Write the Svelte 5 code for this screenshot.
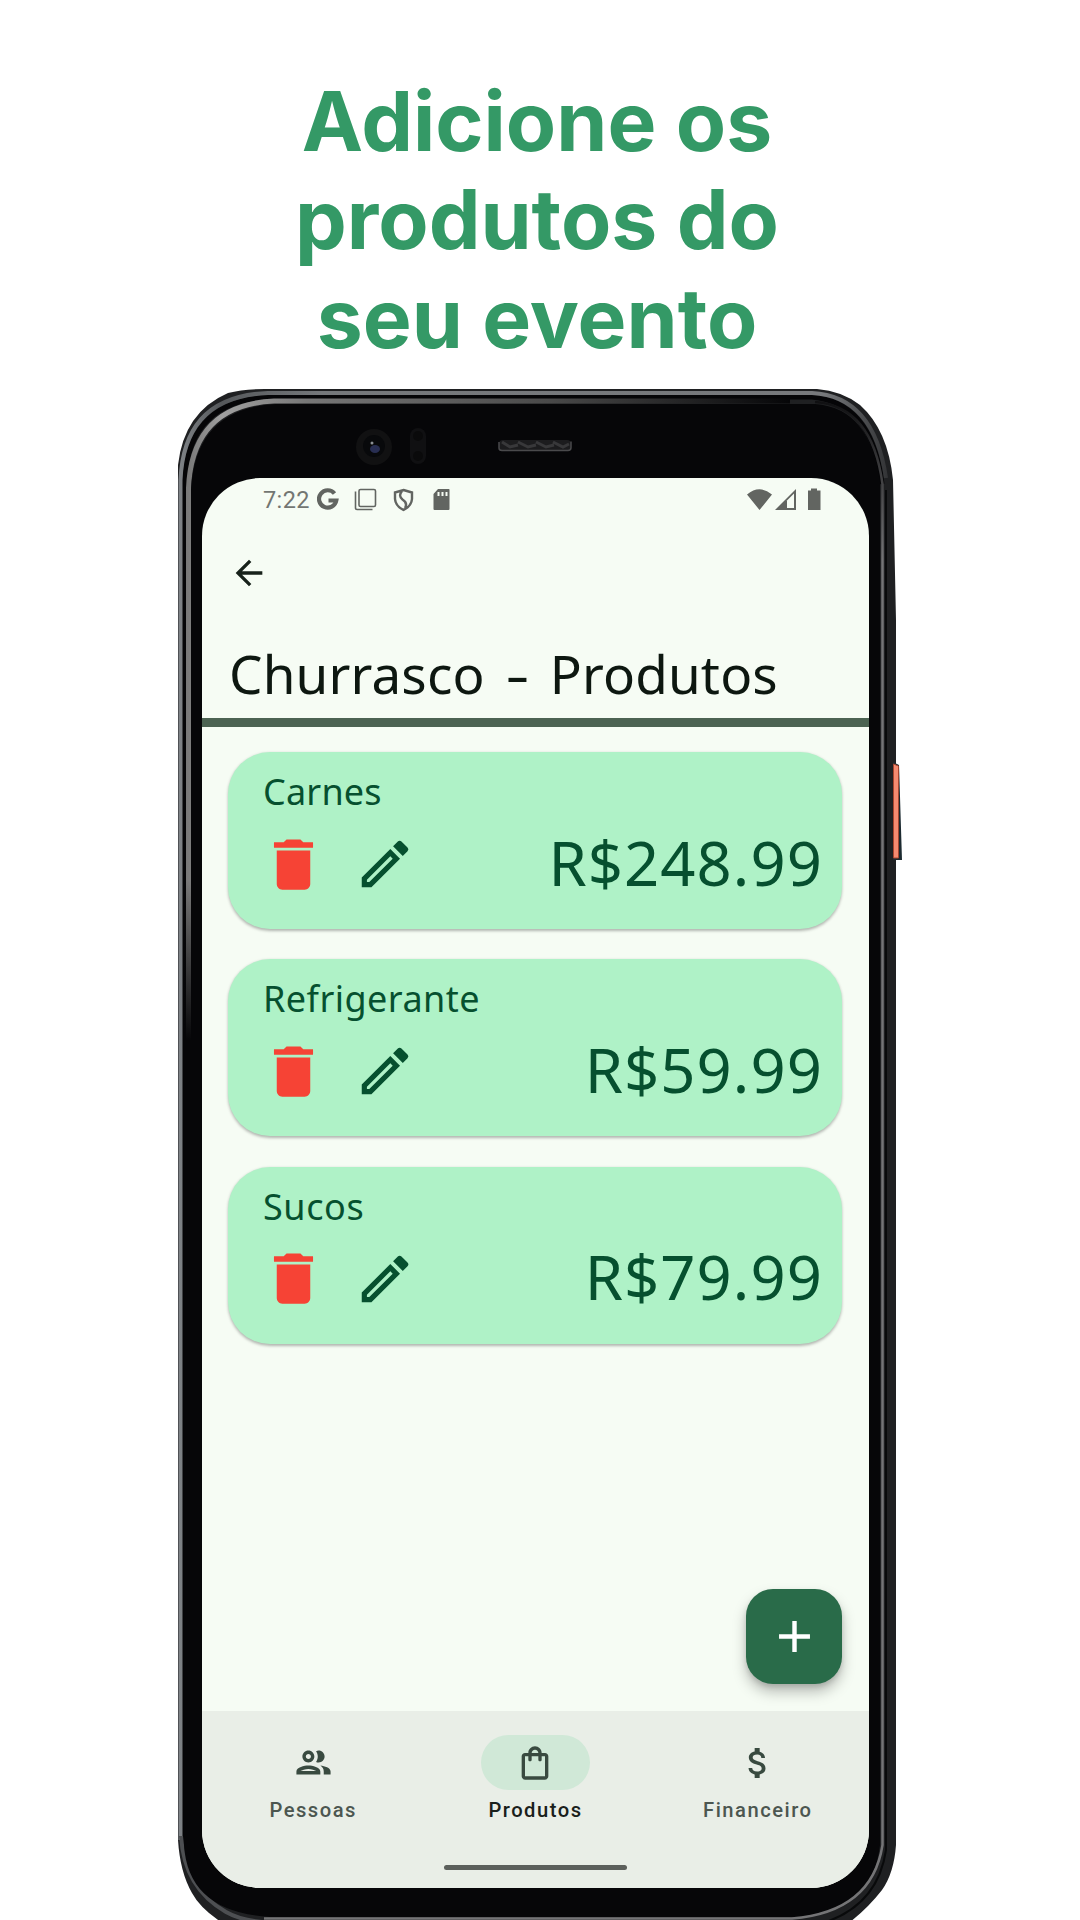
<script>
  const products = [
    { name: 'Carnes', price: 'R$248.99', cls: 'carnes' },
    { name: 'Refrigerante', price: 'R$59.99', cls: 'refri' },
    { name: 'Sucos', price: 'R$79.99', cls: 'sucos' }
  ];
</script>

<main class="page">
  <h1>Adicione os<br />produtos do<br />seu evento</h1>

  <div class="phone">
    <svg class="frame" width="726" height="1531" viewBox="178 389 726 1531" aria-hidden="true">
      <defs>
        <linearGradient id="rim" gradientUnits="userSpaceOnUse" x1="178" x2="896" y1="0" y2="0">
          <stop offset="0" stop-color="#808488" />
          <stop offset="0.06" stop-color="#55585b" />
          <stop offset="0.2" stop-color="#75787b" />
          <stop offset="0.9" stop-color="#77797c" />
          <stop offset="1" stop-color="#2a2b2d" />
        </linearGradient>
        <linearGradient id="bevel" gradientUnits="userSpaceOnUse" x1="186" x2="790" y1="0" y2="0">
          <stop offset="0" stop-color="#777" />
          <stop offset="0.06" stop-color="#a0a0a0" />
          <stop offset="0.2" stop-color="#777" />
          <stop offset="0.6" stop-color="#4a4a4a" />
          <stop offset="1" stop-color="#060608" />
        </linearGradient>
        <linearGradient id="fade" x1="0" x2="0" y1="0" y2="1">
          <stop offset="0" stop-color="#060608" stop-opacity="0" />
          <stop offset="1" stop-color="#060608" />
        </linearGradient>
        <linearGradient id="side" gradientUnits="userSpaceOnUse" x1="0" x2="0" y1="402" y2="560">
          <stop offset="0" stop-color="#101012" />
          <stop offset="1" stop-color="#747476" />
        </linearGradient>
      </defs>
      <path fill="#1f2022" d="M178 465Q184 412 228 393Q243 389 265 389H817Q842 391 860 405Q888 430 893 480L896 620V1845Q894 1873 882 1890Q868 1908 850 1922H221Q200 1908 192 1893Q180 1872 178 1840Z" />
      <path fill="none" stroke="#050507" stroke-width="5" d="M184.500 1844V484Q187 400 270 397H812Q872 402 882 484" />
      <path fill="none" stroke="url(#rim)" stroke-width="4" d="M180.500 1840V480Q184 396 268 393H812Q874 396 886 478" />
      <path fill="none" stroke="#4d4f52" stroke-width="4" d="M181 1836Q184 1888 226 1912Q240 1920 262 1922" />
      <path fill="none" stroke="url(#bevel)" stroke-width="5" d="M188.500 1040V488Q192 405 274 401H790" />
      <path fill="#060608" d="M191 1040V490Q195 408 276 404H815Q871 408 880 484V1845Q872 1917 792 1917H270Q188 1912 184 1845V1040Z" />
      <rect x="184" y="880" width="8" height="161" fill="url(#fade)" />
      <path fill="none" stroke="url(#side)" stroke-width="2.500" d="M815 402Q872 406 882.500 484V1845Q872 1912 792 1918.500H264" />
      <path fill="none" stroke="#090a0b" stroke-width="2" d="M886 490V1850Q878 1904 826 1922" />
      <circle cx="374" cy="447" r="18" fill="#111112" />
      <circle cx="374" cy="446" r="11" fill="#08090b" />
      <ellipse cx="375" cy="449" rx="5" ry="4" fill="#282e52" />
      <circle cx="372" cy="443" r="1.500" fill="#8b9094" />
      <rect x="410" y="428" width="16" height="36" rx="8" fill="#101012" />
      <circle cx="418" cy="436" r="5" fill="#0a0a0b" />
      <circle cx="418" cy="456" r="5" fill="#0a0a0b" />
      <rect x="499" y="440" width="72" height="11" rx="4" fill="#1c1c1e" />
      <path fill="none" stroke="#38383a" stroke-width="3" d="M502 442l8 5 8-2M518 442l10 5 8-2M536 442l10 5 8-2M553 442l10 5 6-3" />
      <path fill="none" stroke="#4a4a4c" stroke-width="1.500" d="M499 442v6q0 2.500 3 2.500h66q3 0 3-3v-6" />
      <path fill="#1c2a30" d="M893 762l6 3 3 95h-9Z" />
      <path fill="#f58a70" stroke="#a8452f" d="M893.500 764l5 2v92h-5Z" />
    </svg>

    <section class="screen">
      <div class="status">
        <span class="time">7:22</span>
        <svg class="notices" width="136" height="24" viewBox="0 0 136 24">
          <g fill="none" stroke="#626561">
            <path stroke-width="4.200" d="M17.500 5.500A8.700 8.700 0 1 0 19.300 12.500H11.500" />
            <path stroke-width="1.600" d="M43.500 1.500H57Q58.500 1.500 58.500 3V17Q58.500 18.500 57 18.500H43.500Q42 18.500 42 17V3Q42 1.500 43.500 1.500ZM38.500 3.500V20Q38.500 21.500 40 21.500H55.500" />
            <path stroke-width="2.400" d="M86.500 2L95 4.500V11Q94.500 18 86.500 22Q78.500 18 78 11V4.500ZM85 3Q81 8 85.500 11.500Q91 15 88 20" />
          </g>
          <path fill="#626561" fill-rule="evenodd" d="M121 1H132Q132.500 1 132.500 2V21Q132.500 22 131.500 22H117.500Q116.500 22 116.500 21V6ZM120.500 4V8H122.500V4ZM124.500 4V8H126.500V4ZM128.500 4V8H130.500V4Z" />
        </svg>
        <svg class="signals" width="76" height="24" viewBox="0 0 76 24">
          <path fill="#626561" d="M0 6.500Q12.500-4 25 6.500L12.500 22ZM28 22L49 1V22ZM61 2.500H64V0.500H70V2.500H73.500V22H61Z" />
          <path fill="#f6fcf4" d="M40 12.500L47 5.500V20H40Z" />
        </svg>
      </div>

      <header>
        <svg class="back" width="40" height="40" viewBox="0 0 24 24"><path fill="#17211a" d="M20 11H7.830l5.590-5.590L12 4l-8 8 8 8 1.410-1.410L7.830 13H20z" /></svg>
        <h2>Churrasco <span class="dash">-</span> Produtos</h2>
      </header>

      <div class="list">
        {#each products as p}
          <article>
            <h3 class={p.cls}>{p.name}</h3>
            <div class="row">
              <svg class="trash" width="67" height="67" viewBox="0 0 24 24"><path fill="#f64335" d="M6 19c0 1.100.9 2 2 2h8c1.100 0 2-.9 2-2V7H6zM19 4h-3.500l-1-1h-5l-1 1H5v2h14z" /></svg>
              <svg class="edit" width="62" height="62" viewBox="0 0 24 24"><path fill="#06502f" d="M14.060 9.020l.92.92L5.920 19H5v-.92zM17.660 3c-.25 0-.51.1-.7.290l-1.830 1.830 3.750 3.750 1.830-1.830a.996.996 0 0 0 0-1.410l-2.340-2.340c-.2-.2-.45-.29-.71-.29M14.060 6.190L3 17.250V21h3.750L17.810 9.940z" /></svg>
              <span class="price">{p.price}</span>
            </div>
          </article>
        {/each}
      </div>

      <div class="action">
        <button aria-label="Adicionar"><svg width="53" height="53" viewBox="0 0 24 24"><path fill="#fff" d="M19 13h-6v6h-2v-6H5v-2h6V5h2v6h6z" /></svg></button>
      </div>

      <nav>
        <div class="tabs">
          <div class="tab">
            <span class="pill"><svg width="41" height="41" viewBox="0 0 24 24"><path fill="#394a40" d="M9 13.750c-2.340 0-7 1.170-7 3.500V19h14v-1.750c0-2.330-4.660-3.500-7-3.500zM4.340 17c.84-.58 2.870-1.250 4.660-1.250s3.820.67 4.660 1.250H4.340zM9 12c1.930 0 3.500-1.570 3.500-3.500S10.930 5 9 5 5.500 6.570 5.500 8.500 7.070 12 9 12zm0-5c.83 0 1.500.67 1.500 1.500S9.830 10 9 10s-1.500-.67-1.500-1.500S8.170 7 9 7zm7.040 6.810c1.160.84 1.960 1.960 1.960 3.440V19h4v-1.750c0-2.020-3.500-3.170-5.960-3.440zM15 12c1.930 0 3.500-1.570 3.500-3.500S16.930 5 15 5c-.54 0-1.040.13-1.500.35.63.89 1 1.980 1 3.150s-.37 2.260-1 3.150c.46.22.96.35 1.500.35z" /></svg></span>
            <span class="label">Pessoas</span>
          </div>
          <div class="tab selected">
            <span class="pill"><svg width="40" height="40" viewBox="0 0 24 24"><path fill="#394a40" d="M18 6h-2c0-2.210-1.790-4-4-4S8 3.790 8 6H6c-1.100 0-2 .9-2 2v12c0 1.100.9 2 2 2h12c1.100 0 2-.9 2-2V8c0-1.100-.9-2-2-2m-6-2c1.100 0 2 .9 2 2h-4c0-1.100.9-2 2-2m6 16H6V8h2v2c0 .55.450 1 1 1s1-.45 1-1V8h4v2c0 .55.450 1 1 1s1-.45 1-1V8h2z" /></svg></span>
            <span class="label">Produtos</span>
          </div>
          <div class="tab">
            <span class="pill"><svg width="40" height="40" viewBox="0 0 24 24"><path fill="#394a40" d="M11.800 10.900c-2.270-.59-3-1.200-3-2.150 0-1.090 1.010-1.850 2.700-1.850 1.780 0 2.440.85 2.500 2.100h2.210c-.07-1.720-1.120-3.300-3.210-3.810V3h-3v2.160c-1.940.42-3.500 1.680-3.500 3.610 0 2.310 1.910 3.460 4.700 4.130 2.500.6 3 1.480 3 2.410 0 .69-.49 1.790-2.700 1.790-2.060 0-2.870-.92-2.980-2.100h-2.200c.12 2.190 1.760 3.420 3.680 3.830V21h3v-2.150c1.950-.37 3.500-1.500 3.500-3.550 0-2.840-2.430-3.810-4.700-4.400" /></svg></span>
            <span class="label">Financeiro</span>
          </div>
        </div>
        <div class="handle"></div>
      </nav>
    </section>
  </div>
</main>

<style>
  :global(body) { background: #fff; }
  * { box-sizing: border-box; margin: 0; }
  svg { display: block; flex: none; }
  .page {
    width: 1080px;
    height: 1920px;
    overflow: hidden;
    background: #fff;
    display: flex;
    flex-direction: column;
  }
  h1 {
    height: 317px;
    margin-top: 72px;
    padding-right: 6px;
    font: 700 82.200px/98.400px Inter, sans-serif;
    color: #349966;
    text-align: center;
  }
  .phone { display: grid; margin-left: 178px; width: 726px; height: 1531px; }
  .frame, .screen { grid-area: 1 / 1; }
  .screen {
    margin: 89px 0 0 24px;
    width: 667px;
    height: 1410px;
    border-radius: 58px;
    overflow: hidden;
    background: #f6fcf4;
    display: flex;
    flex-direction: column;
    font-family: "Noto Sans", sans-serif;
  }
  .status {
    display: flex;
    align-items: center;
    height: 43px;
    padding: 0 46px 0 61px;
  }
  .time { width: 54px; font: 400 23.500px Roboto, sans-serif; letter-spacing: 0.400px; color: #737672; }
  .signals { margin-left: auto; }
  header {
    height: 206px;
    border-bottom: 9px solid #4c6352;
    padding: 32px 0 0 27px;
  }
  h2 {
    margin-top: 44px;
    font-size: 53px;
    line-height: 74px;
    font-weight: 400;
    letter-spacing: 0.150px;
    word-spacing: 10px;
    color: #0d1710;
    white-space: nowrap;
  }
  .dash { display: inline-block; transform: scaleX(1.400); }
  .list { display: flex; flex-direction: column; gap: 30.300px; padding: 25px 27px 0 26px; }
  article {
    height: 177px;
    border-radius: 42px;
    background: #aff2c7;
    box-shadow: 0 1.500px 3px rgba(0, 0, 0, 0.28);
    padding: 16px 19px 0 35px;
    color: #06502f;
  }
  h3 { font-size: 36px; line-height: 48px; font-weight: 400; letter-spacing: 0.200px; }
  .refri { letter-spacing: 0.450px; }
  .sucos { letter-spacing: 0.600px; }
  .row { display: flex; align-items: center; height: 96px; }
  .trash { margin-left: -3px; }
  .edit { margin-left: 27px; }
  .price {
    margin-left: auto;
    padding-bottom: 5px;
    font-size: 61.500px;
    line-height: 84px;
    letter-spacing: 1.100px;
  }
  .action { flex: 1; display: flex; justify-content: flex-end; align-items: flex-end; padding: 0 27px 27px; }
  button {
    width: 96px;
    height: 95px;
    border: 0;
    padding: 0;
    border-radius: 27px;
    background: #296b49;
    box-shadow: 0 8px 14px rgba(0, 0, 0, 0.25), 0 3px 5px rgba(0, 0, 0, 0.12);
    display: grid;
    place-items: center;
  }
  nav { height: 177px; background: #e9eee7; padding-top: 24px; }
  .tabs { display: grid; grid-template-columns: repeat(3, 1fr); }
  .tab { display: flex; flex-direction: column; align-items: center; }
  .pill { width: 109px; height: 55px; border-radius: 28px; display: grid; place-items: center; }
  .selected .pill { background: #d0e8d7; }
  .label { margin-top: 7px; font: 500 20.200px/26px Roboto, sans-serif; letter-spacing: 1.500px; color: #4c5650; }
  .selected .label { color: #19201b; }
  .handle { width: 183px; height: 5px; border-radius: 3px; background: #5c605c; margin: 42px auto 0; }
</style>
